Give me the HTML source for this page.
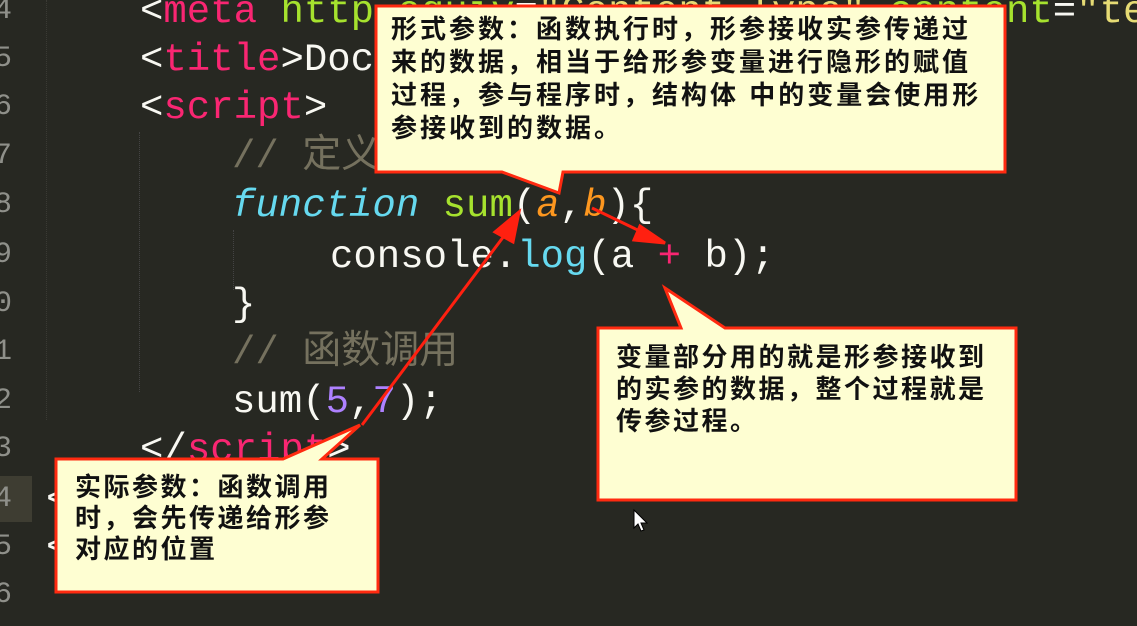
<!DOCTYPE html>
<html><head><meta charset="utf-8"><style>
html,body{margin:0;width:1137px;height:626px;overflow:hidden}
body{background:#272822;position:relative;font-family:"Liberation Mono",monospace}
#w{position:absolute;left:0;top:0;width:1137px;height:626px;overflow:hidden}
.ln{position:absolute;left:-14px;width:26px;text-align:right;color:#8f908a;font-size:30px;font-family:"Liberation Mono",monospace}
.c{position:absolute;font-size:39px;line-height:48px;white-space:pre;color:#f8f8f2;font-family:"Liberation Mono","Noto Sans CJK SC",monospace}
.p{color:#f92672}.g{color:#a6e22e}.y{color:#e6db74}.cy{color:#66d9ef}.o{color:#fd971f}.pu{color:#ae81ff}.cm{color:#75715e}
.t{position:absolute;font-family:"Liberation Sans","WenQuanYi Zen Hei","Noto Sans CJK SC",sans-serif;font-weight:bold;font-size:26px;color:#111;white-space:pre;letter-spacing:2.5px}
</style></head><body><div id="w">
<div style="position:absolute;left:0;top:476px;width:32px;height:46px;background:#3e3d32"></div>
<div style="position:absolute;left:46px;top:0;height:420px;border-left:1px dotted #3a3a34"></div>
<div style="position:absolute;left:139px;top:132px;height:260px;border-left:1px dotted #444"></div>
<div style="position:absolute;left:233px;top:230px;height:60px;border-left:1px dotted #444"></div>
<div class="ln" style="top:-6px">4</div><div class="ln" style="top:42px">5</div><div class="ln" style="top:90px">6</div><div class="ln" style="top:139px">7</div><div class="ln" style="top:188px">8</div><div class="ln" style="top:238px">9</div><div class="ln" style="top:287px">0</div><div class="ln" style="top:335px">1</div><div class="ln" style="top:384px">2</div><div class="ln" style="top:432px">3</div><div class="ln" style="top:482px">4</div><div class="ln" style="top:530px">5</div><div class="ln" style="top:578px">6</div>
<div class="c" style="left:140px;top:-12px">&lt;<span class="p">meta</span> <span class="g">http-equiv</span>=<span class="y">"Content-Type"</span> <span class="g">content</span>=<span class="y">"te</span></div>
<div class="c" style="left:140px;top:36px">&lt;<span class="p">title</span>&gt;Document&lt;/<span class="p">title</span>&gt;</div>
<div class="c" style="left:140px;top:84px">&lt;<span class="p">script</span>&gt;</div>
<div class="c cm" style="left:232px;top:133px">// 定义函数</div>
<div class="c" style="left:232px;top:182px"><i class="cy">function</i> <span class="g">sum</span>(<i class="o">a</i>,<i class="o">b</i>){</div>
<div class="c" style="left:330px;top:233px">console.<span class="cy">log</span>(a <span class="p">+</span> b);</div>
<div class="c" style="left:232px;top:281px">}</div>
<div class="c cm" style="left:232px;top:329px">// 函数调用</div>
<div class="c" style="left:232px;top:378px">sum(<span class="pu">5</span>,<span class="pu">7</span>);</div>
<div class="c" style="left:140px;top:426px">&lt;/<span class="p">script</span>&gt;</div>
<div class="c" style="left:46px;top:476px">&lt;/<span class="p">head</span>&gt;</div>
<div class="c" style="left:46px;top:524px">&lt;<span class="p">body</span>&gt;</div>
<svg width="1137" height="626" style="position:absolute;left:0;top:0">
<g fill="#fefed2" stroke="#ff2a10" stroke-width="3" stroke-linejoin="miter">
<path d="M376,6 H1005 V172 H563 L559,193 L502,172 H376 Z"/>
<path d="M56,459 H283 L360,425 L322,459 H378 V592 H56 Z"/>
<path d="M598,328 H681 L665,288 L725,328 H1016 V500 H598 Z"/>
</g>
<g stroke="#ff2010" stroke-width="3" fill="#ff2010">
<line x1="362" y1="425" x2="510" y2="228"/>
<polygon points="519,212 495,232 513,242"/>
<line x1="592" y1="208" x2="648" y2="235"/>
<polygon points="665,243 640,226 634,240"/>
</g>
<path d="M634,510 l0,18 l4,-4 l3,7 l3,-1 l-3,-7 l6,0 z" fill="#fff" stroke="#000" stroke-width="1"/>
</svg>
<div class="t" style="left:391px;top:13px;line-height:33px;letter-spacing:3px">形式参数：函数执行时，形参接收实参传递过
来的数据，相当于给形参变量进行隐形的赋值
过程，参与程序时，结构体 中的变量会使用形
参接收到的数据。</div>
<div class="t" style="left:75px;top:472px;line-height:31px">实际参数：函数调用
时，会先传递给形参
对应的位置</div>
<div class="t" style="left:616px;top:341px;line-height:32px">变量部分用的就是形参接收到
的实参的数据，整个过程就是
传参过程。</div>
</div></body></html>
